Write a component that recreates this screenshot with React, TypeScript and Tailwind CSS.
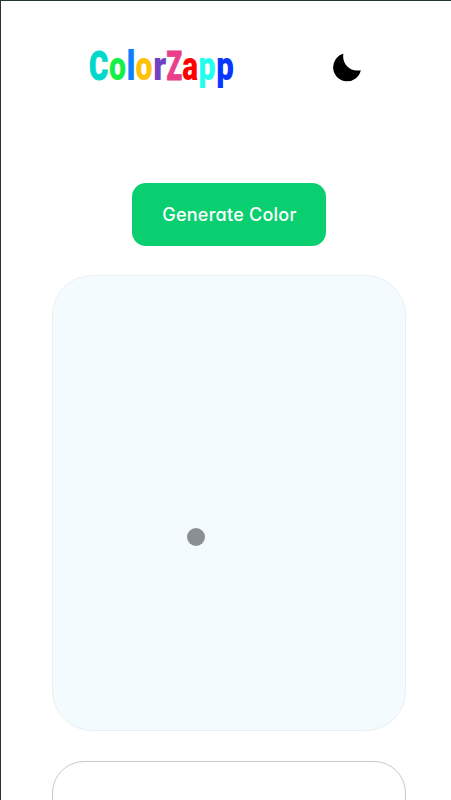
interface Letter {
  char: string;
  x: number;
  width: number;
  color: string;
}

// the wordmark is condensed, so every letter has its own advance
const LETTERS: Letter[] = [
  { char: 'C', x: 9, width: 19.2, color: '#00d8cc' },
  { char: 'o', x: 28.9, width: 17, color: '#14f046' },
  { char: 'l', x: 46.6, width: 9, color: '#0c80ff' },
  { char: 'o', x: 55.6, width: 17, color: '#ffc107' },
  { char: 'r', x: 73.2, width: 13, color: '#6f42c1' },
  { char: 'Z', x: 86.6, width: 15.6, color: '#e83e8c' },
  { char: 'a', x: 102.2, width: 15.8, color: '#ff0000' },
  { char: 'p', x: 118.4, width: 17, color: '#22ffee' },
  { char: 'p', x: 136.2, width: 17.6, color: '#0a37ff' },
];

function Logo() {
  return (
    <svg width="165" height="55" viewBox="0 0 165 55" aria-label="ColorZapp" className="font-['Roboto',sans-serif] text-[41px] font-black">
      <text y="40.3">
        {LETTERS.map((l, i) => (
          <tspan
            key={i}
            x={l.x}
            fill={l.color}
            stroke={l.color}
            strokeWidth={l.char === 'C' || l.char === 'Z' ? 0.9 : 0}
            textLength={l.width}
            lengthAdjust="spacingAndGlyphs"
          >
            {l.char}
          </tspan>
        ))}
      </text>
    </svg>
  );
}

function MoonIcon() {
  return (
    <svg width="30" height="30" viewBox="0 0 30 30" fill="#000">
      <path d="M11.4 0.8C9.6 10.2 17.6 19.6 28.8 17.2A14 14 0 1 1 11.4 0.8Z" />
    </svg>
  );
}

export default function App() {
  return (
    <div className="h-[800px] w-full overflow-hidden border-l border-t border-[#263435] bg-white">
      <header className="flex h-[182px] items-start pl-[79px] pt-[39px]">
        <Logo />
        <button aria-label="Dark mode" className="ml-[87px] mt-[13px]">
          <MoonIcon />
        </button>
      </header>

      <main className="flex flex-col items-center pl-[5px]">
        <button className="h-[63px] w-[194px] shrink-0 rounded-[14px] bg-[#0acf70] pb-px pl-[2px] font-['Inter',sans-serif] text-[18px] font-medium tracking-[0.25px] text-white [font-feature-settings:'cv11']">
          Generate Color
        </button>
        <div className="relative mt-[29px] h-[456px] w-[354px] shrink-0 rounded-[40px] border border-[#e9f0f3] bg-[#f3fbff]">
          <span className="absolute left-[134px] top-[252px] size-[18px] rounded-full bg-[#8b8f91]" />
        </div>
        <div className="mt-[30px] h-[456px] w-[354px] shrink-0 rounded-[32px] border border-[#cfc6c8] bg-white" />
      </main>
    </div>
  );
}
